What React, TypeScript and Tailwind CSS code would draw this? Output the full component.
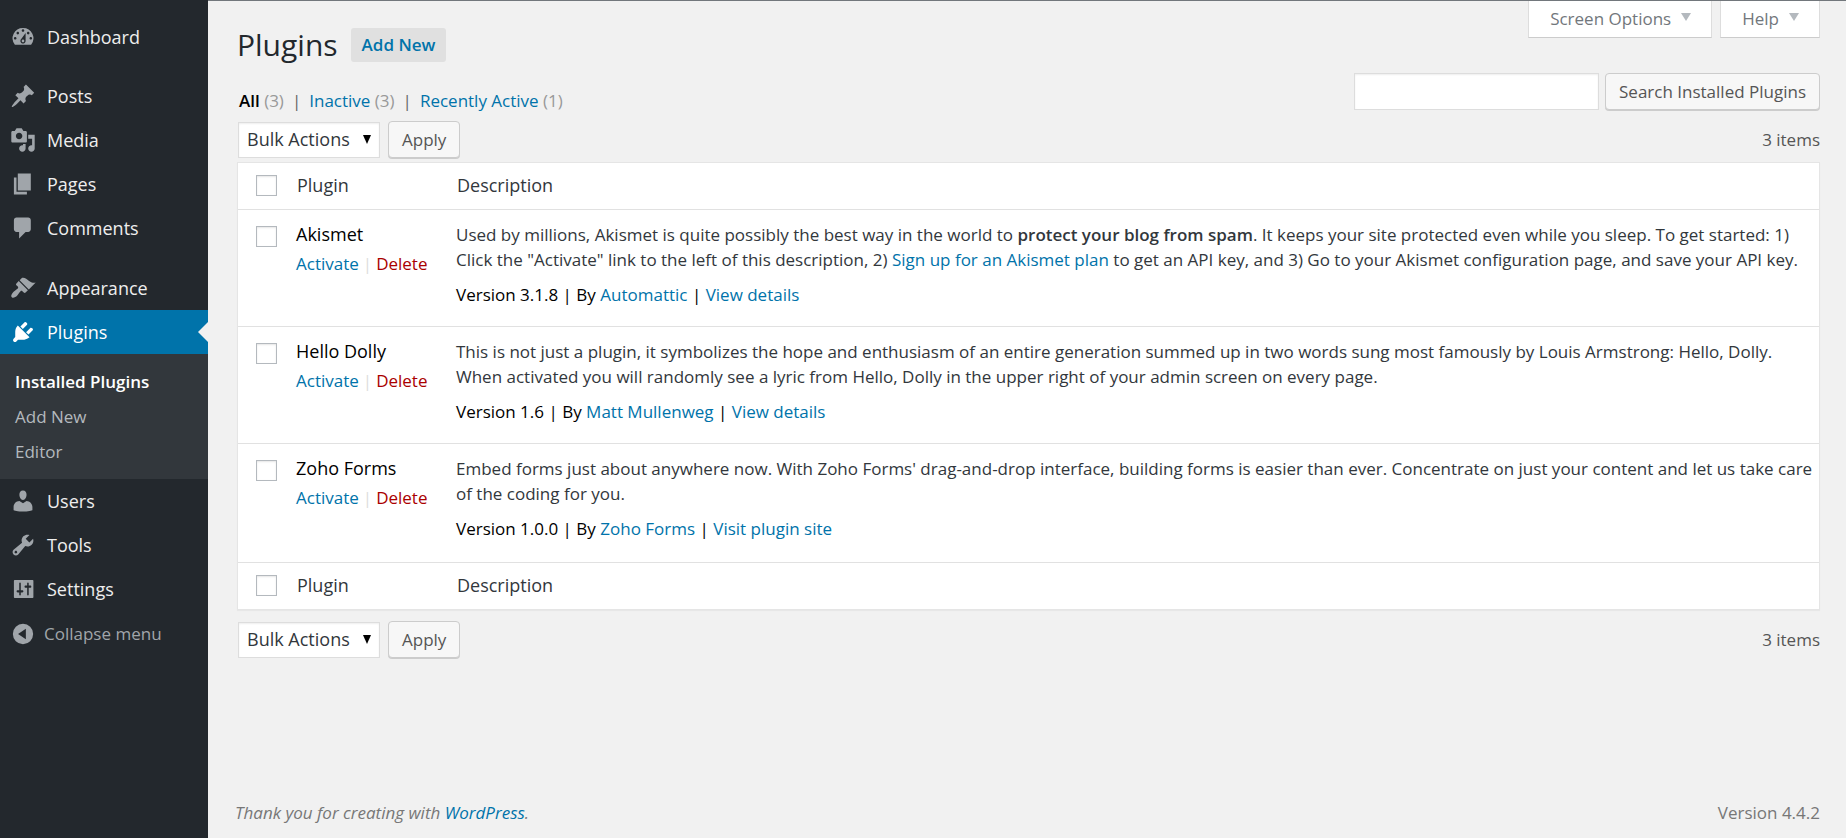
import { useState } from 'react'
import type { ReactNode } from 'react'

const icons = {
  dashboard: 'M3.76 16h12.48A7.998 7.998 0 0 0 10 3a7.998 7.998 0 0 0-6.24 13zM10 4c.55 0 1 .45 1 1s-.45 1-1 1-1-.45-1-1 .45-1 1-1zM6 6c.55 0 1 .45 1 1s-.45 1-1 1-1-.45-1-1 .45-1 1-1zm8 0c.55 0 1 .45 1 1s-.45 1-1 1-1-.45-1-1 .45-1 1-1zm-5.37 5.55L12 7v6c0 1.1-.9 2-2 2s-2-.9-2-2c0-.57.24-1.08.63-1.45zM4 10c.55 0 1 .45 1 1s-.45 1-1 1-1-.45-1-1 .45-1 1-1zm12 0c.55 0 1 .45 1 1s-.45 1-1 1-1-.45-1-1 .45-1 1-1zm-5 3c0-.55-.45-1-1-1s-1 .45-1 1 .45 1 1 1 1-.45 1-1z',
  posts: 'M10.44 3.02l1.82-1.82 6.36 6.35-1.83 1.82c-1.05-.68-2.48-.57-3.41.36l-.75.75c-.92.93-1.04 2.35-.35 3.41l-1.83 1.82-2.41-2.41-2.8 2.79c-.42.42-3.38 2.71-3.8 2.29s1.86-3.39 2.28-3.81l2.79-2.79L4.1 9.36l1.83-1.82c1.05.69 2.48.57 3.4-.36l.75-.75c.93-.92 1.05-2.35.36-3.41z',
  media: 'M13 11V4c0-.55-.45-1-1-1h-1.67L9 1H5L3.67 3H2c-.55 0-1 .45-1 1v7c0 .55.45 1 1 1h10c.55 0 1-.45 1-1zM7 4.5c1.38 0 2.5 1.12 2.5 2.5S8.38 9.5 7 9.5 4.5 8.38 4.5 7 5.62 4.5 7 4.5zM14 6h5v10.5c0 1.38-1.12 2.5-2.5 2.5S14 17.88 14 16.5s1.12-2.5 2.5-2.5c.17 0 .34.02.5.05V9h-3V6zm-4 8.05V13h2v3.5c0 1.38-1.12 2.5-2.5 2.5S7 17.88 7 16.5 8.12 14 9.5 14c.17 0 .34.02.5.05z',
  pages: 'M6 15V2h10v13H6zm-1 1h8v2H3V5h2v11z',
  comments: 'M5 2h9c1.1 0 2 .9 2 2v7c0 1.1-.9 2-2 2h-2l-5 5v-5H5c-1.1 0-2-.9-2-2V4c0-1.1.9-2 2-2z',
  appearance: 'M14.48 11.06L7.41 3.99l1.5-1.5c.5-.56 2.3-.47 3.51.32 1.21.8 1.43 1.28 2.91 2.1 1.18.64 2.45 1.26 4.45.85zm-.71.71L6.7 4.7 4.93 6.47c-.39.39-.39 1.02 0 1.41l1.06 1.06c.39.39.39 1.03 0 1.42-.6.6-1.43 1.11-2.21 1.69-.35.26-.7.53-1.01.84C1.43 14.23.4 16.08 1.4 17.07c.99 1 2.84-.03 4.18-1.36.31-.31.58-.66.85-1.02.57-.78 1.08-1.61 1.69-2.21.39-.39 1.02-.39 1.41 0l1.06 1.06c.39.39 1.02.39 1.41 0z',
  plugins: 'M13.11 4.36L9.87 7.6 8 5.73l3.24-3.24c.35-.34 1.05-.2 1.56.32.52.51.66 1.21.31 1.55zm-8 1.77l.91-1.12 9.01 9.01-1.19.84c-.71.71-2.63 1.16-3.82 1.16H6.14L4.9 17.26c-.59.59-1.54.59-2.12 0-.59-.58-.59-1.53 0-2.12l1.24-1.24v-3.88c0-1.13.4-3.19 1.09-3.89zm7.26 3.97l3.24-3.24c.34-.35 1.04-.21 1.55.31.52.51.66 1.21.31 1.55l-3.24 3.25z',
  users: 'M10 9.25c-2.27 0-2.73-3.44-2.73-3.44C7 4.02 7.82 2 9.97 2c2.16 0 2.98 2.02 2.71 3.81 0 0-.41 3.44-2.68 3.44zm0 2.57L12.72 10c2.39 0 4.52 2.33 4.52 4.53v2.49s-3.65 1.13-7.24 1.13c-3.65 0-7.24-1.13-7.24-1.13v-2.49c0-2.25 1.94-4.48 4.47-4.48z',
  tools: 'M16.68 9.77c-1.34 1.34-3.3 1.67-4.95.99l-5.41 6.52c-.99.99-2.59.99-3.58 0s-.99-2.59 0-3.57l6.52-5.42c-.68-1.65-.35-3.61.99-4.95 1.28-1.28 3.12-1.62 4.72-1.06l-2.89 2.89 2.82 2.82 2.86-2.87c.53 1.58.18 3.39-1.08 4.65zM3.81 16.21c.4.39 1.04.39 1.43 0 .4-.4.4-1.04 0-1.43-.39-.4-1.03-.4-1.43 0-.39.39-.39 1.03 0 1.43z',
  settings: 'M18 16.4V3.6c0-.33-.27-.6-.6-.6H3.6c-.33 0-.6.27-.6.6v12.8c0 .33.27.6.6.6h13.8c.33 0 .6-.27.6-.6zM8.3 11h1.2c.5 0 .8.4.8.8s-.3.9-.8.9H8.3v1.8c0 .28-.3.5-.6.5s-.6-.22-.6-.5v-1.8H5.9c-.5 0-.8-.4-.8-.9s.3-.8.8-.8h1.2V5.5c0-.28.3-.5.6-.5s.6.22.6.5V11zm4.9-1.9H12c-.5 0-.8-.4-.8-.9s.3-.8.8-.8h1.2V5.5c0-.28.3-.5.6-.5s.6.22.6.5v1.9h1.2c.5 0 .8.4.8.8s-.3.9-.8.9h-1.2v5.4c0 .28-.3.5-.6.5s-.6-.22-.6-.5V9.1z',
  collapse: 'M10 2.2a7.8 7.8 0 1 0 0 15.6 7.8 7.8 0 0 0 0-15.6zM12.2 6v8L6.2 10z',
}

type IconName = keyof typeof icons

function Icon({ name }: { name: IconName }) {
  return (
    <svg viewBox="0 0 20 20" className="size-[26px] shrink-0" fill="currentColor" fillRule="evenodd" aria-hidden>
      <path d={icons[name]} />
    </svg>
  )
}

function MenuItem({ icon, label }: { icon: IconName; label: string }) {
  return (
    <a href="#" className="flex h-11 items-center gap-[11px] pl-[10px] text-[18px] text-[#eeeeee]">
      <span className="text-[#a0a5aa]"><Icon name={icon} /></span>
      {label}
    </a>
  )
}

function Sidebar() {
  return (
    <nav aria-label="Main menu" className="w-52 shrink-0 bg-[#23282d] pt-[15px]">
      <MenuItem icon="dashboard" label="Dashboard" />
      <div className="h-[15px]" />
      <MenuItem icon="posts" label="Posts" />
      <MenuItem icon="media" label="Media" />
      <MenuItem icon="pages" label="Pages" />
      <MenuItem icon="comments" label="Comments" />
      <div className="h-4" />
      <MenuItem icon="appearance" label="Appearance" />
      <a href="#" aria-current="page" className="relative flex h-11 items-center gap-[11px] bg-[#0073aa] pl-[10px] text-[18px] text-white">
        <Icon name="plugins" />
        Plugins
        <svg viewBox="0 0 10 20" className="absolute top-3 right-0 h-5 w-[10px]" fill="#f1f1f1" aria-hidden>
          <path d="M10 0v20L0 10z" />
        </svg>
      </a>
      <div className="bg-[#32373c] py-[10px] text-[17px] text-[#b4b9be]">
        <a href="#" className="block pl-[15px] leading-[35px] font-semibold text-white">Installed Plugins</a>
        <a href="#" className="block pl-[15px] leading-[35px]">Add New</a>
        <a href="#" className="block pl-[15px] leading-[35px]">Editor</a>
      </div>
      <MenuItem icon="users" label="Users" />
      <MenuItem icon="tools" label="Tools" />
      <MenuItem icon="settings" label="Settings" />
      <button type="button" className="flex h-[46px] items-center gap-2 pl-[10px] text-[17px] text-[#a0a5aa]">
        <Icon name="collapse" />
        Collapse menu
      </button>
    </nav>
  )
}

function ScreenTab({ label }: { label: string }) {
  return (
    <button type="button" className="flex h-[37px] items-center gap-[10px] border border-t-0 border-[#dddddd] border-b-[#cccccc] bg-white pr-5 pl-[21px] text-[17px] text-[#72777c]">
      {label}
      <svg viewBox="0 0 10 8" className="mb-1 h-2 w-[10px]" fill="#b4b9be" aria-hidden>
        <path d="M0 0h10L5 8z" />
      </svg>
    </button>
  )
}

function Button({ children }: { children: ReactNode }) {
  return (
    <button type="button" className="h-[37px] rounded-[4px] border border-[#cccccc] bg-[#f7f7f7] px-[13px] text-[17px] text-[#555555] shadow-[0_1px_0_#cccccc]">
      {children}
    </button>
  )
}

function TableNav() {
  return (
    <div className="flex items-center justify-between text-[17px] text-[#555555]">
      <div className="flex items-center gap-2 pl-px">
        <div className="relative">
          <select
            aria-label="Select bulk action"
            className="block h-9 w-[142px] appearance-none border border-[#dddddd] bg-white pl-2 text-[18px] text-[#32373c] shadow-[inset_0_1px_2px_rgba(0,0,0,0.07)]"
          >
            <option>Bulk Actions</option>
            <option>Activate</option>
            <option>Deactivate</option>
            <option>Update</option>
            <option>Delete</option>
          </select>
          <svg viewBox="0 0 8 9" className="pointer-events-none absolute top-[13px] right-[9px] h-[9px] w-2" fill="#000" aria-hidden>
            <path d="M0 0h8L4 9z" />
          </svg>
        </div>
        <Button>Apply</Button>
      </div>
      <span>3 items</span>
    </div>
  )
}

type CheckProps = { label: string; checked: boolean; onChange: () => void }

function Check({ label, checked, onChange }: CheckProps) {
  return (
    <input
      type="checkbox"
      aria-label={label}
      checked={checked}
      onChange={onChange}
      className="block size-[21px] appearance-none border border-[#b4b9be] bg-white shadow-[inset_0_1px_2px_rgba(0,0,0,0.1)] checked:bg-[#1e8cbe]"
    />
  )
}

function A({ children }: { children: ReactNode }) {
  return <a href="#" className="text-[#0073aa]">{children}</a>
}

const plugins = [
  {
    name: 'Akismet',
    description: (
      <>
        Used by millions, Akismet is quite possibly the best way in the world to <strong className="font-semibold">protect your blog from spam</strong>. It keeps your site protected even while you sleep. To get started: 1) Click the "Activate" link to the left of this description, 2) <A>Sign up for an Akismet plan</A> to get an API key, and 3) Go to your Akismet configuration page, and save your API key.
      </>
    ),
    version: '3.1.8',
    author: 'Automattic',
    link: 'View details',
  },
  {
    name: 'Hello Dolly',
    description: 'This is not just a plugin, it symbolizes the hope and enthusiasm of an entire generation summed up in two words sung most famously by Louis Armstrong: Hello, Dolly. When activated you will randomly see a lyric from Hello, Dolly in the upper right of your admin screen on every page.',
    version: '1.6',
    author: 'Matt Mullenweg',
    link: 'View details',
  },
  {
    name: 'Zoho Forms',
    description: "Embed forms just about anywhere now. With Zoho Forms' drag-and-drop interface, building forms is easier than ever. Concentrate on just your content and let us take care of the coding for you.",
    version: '1.0.0',
    author: 'Zoho Forms',
    link: 'Visit plugin site',
  },
]

function PluginTable() {
  const [selected, setSelected] = useState<string[]>([])
  const allSelected = selected.length === plugins.length
  const toggleAll = () => setSelected(allSelected ? [] : plugins.map(p => p.name))
  const toggle = (name: string) =>
    setSelected(s => (s.includes(name) ? s.filter(n => n !== name) : [...s, name]))

  const headings = (
    <>
      <td className="w-[46px] pl-[18px]"><Check label="Select all" checked={allSelected} onChange={toggleAll} /></td>
      <th scope="col" className="w-40 pl-[13px] text-[18px] font-normal">Plugin</th>
      <th scope="col" className="pl-[13px] text-[18px] font-normal">Description</th>
    </>
  )

  return (
    <div className="mt-1 mb-[5px] border border-[#e5e5e5] bg-white shadow-[0_1px_1px_rgba(0,0,0,0.04)]">
      <table className="w-full table-fixed border-collapse text-left text-[17px] leading-[25px] text-[#32373c]">
        <thead>
          <tr className="h-[46px] border-b border-[#e1e1e1]">{headings}</tr>
        </thead>
        <tbody>
          {plugins.map(p => (
            <tr key={p.name} className="border-b border-[#e1e1e1] align-top last:h-[119px]">
              <td className="pt-4 pl-[18px]">
                <Check label={`Select ${p.name}`} checked={selected.includes(p.name)} onChange={() => toggle(p.name)} />
              </td>
              <td className="pt-3 pl-3">
                <div className="text-[18px] text-black">{p.name}</div>
                <div className="mt-1 flex gap-1">
                  <A>Activate</A>
                  <span className="text-[#dddddd]">|</span>
                  <a href="#" className="text-[#aa0000]">Delete</a>
                </div>
              </td>
              <td className="pt-3 pb-[19px] pl-3">
                <p>{p.description}</p>
                <p className="mt-[10px] text-black">
                  Version {p.version} | By <A>{p.author}</A> | <A>{p.link}</A>
                </p>
              </td>
            </tr>
          ))}
        </tbody>
        <tfoot>
          <tr className="h-[47px]">{headings}</tr>
        </tfoot>
      </table>
    </div>
  )
}

export default function App() {
  return (
    <div className="flex min-h-screen bg-[#f1f1f1] font-['Open_Sans',sans-serif]">
      <Sidebar />
      <main className="flex min-w-0 flex-1 flex-col border-t border-[#72777c] pr-[26px] pl-[29px]">
        <header className="flex h-[72px] items-start justify-between">
          <div className="flex items-center gap-[13px] pt-[22px]">
            <h1 className="text-[30px] leading-[44px] text-[#23282d]">Plugins</h1>
            <a href="#" className="rounded-[3px] bg-[#e0e0e0] px-[11px] text-[17px] leading-[34px] font-semibold text-[#0073aa]">Add New</a>
          </div>
          <div className="flex gap-2">
            <ScreenTab label="Screen Options" />
            <ScreenTab label="Help" />
          </div>
        </header>

        <div className="flex h-[38px] justify-between">
          <ul className="flex gap-2 self-end pl-[2px] text-[17px] leading-5 text-[#666666]">
            <li><a href="#" className="font-semibold text-black">All</a> <span className="text-[#999999]">(3)</span></li>
            <li>|</li>
            <li><A>Inactive</A> <span className="text-[#999999]">(3)</span></li>
            <li>|</li>
            <li><A>Recently Active</A> <span className="text-[#999999]">(1)</span></li>
          </ul>
          <form className="flex gap-[6px]" onSubmit={e => e.preventDefault()}>
            <input
              type="search"
              aria-label="Search Installed Plugins"
              className="h-[37px] w-[245px] border border-[#dddddd] bg-white px-2 text-[17px] shadow-[inset_0_1px_2px_rgba(0,0,0,0.07)]"
            />
            <Button>Search Installed Plugins</Button>
          </form>
        </div>

        <div className="mt-[10px]">
          <TableNav />
        </div>
        <PluginTable />
        <div className="mt-[6px]">
          <TableNav />
        </div>

        <footer className="mt-auto flex justify-between pb-[13px] text-[17px] leading-[25px] text-[#777777]">
          <p className="-ml-[2px] italic">Thank you for creating with <A>WordPress</A>.</p>
          <p>Version 4.4.2</p>
        </footer>
      </main>
    </div>
  )
}
